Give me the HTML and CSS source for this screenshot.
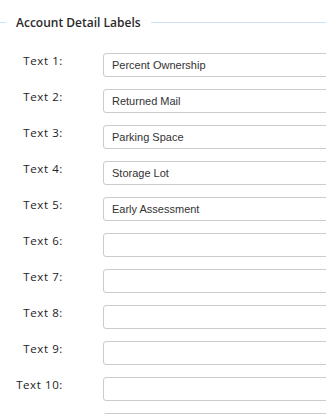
FILE: index.html
```html
<!DOCTYPE html>
<html>
<head>
<link rel="stylesheet" href="styles.css">
</head>
<body>

<fieldset class="labels">
    <legend>Account Detail Labels</legend>
    <div class="row"><label>Text 1:</label><input type="text" value="Percent Ownership"></div>
    <div class="row"><label>Text 2:</label><input type="text" value="Returned Mail"></div>
    <div class="row"><label>Text 3:</label><input type="text" value="Parking Space"></div>
    <div class="row"><label>Text 4:</label><input type="text" value="Storage Lot"></div>
    <div class="row"><label>Text 5:</label><input type="text" value="Early Assessment"></div>
    <div class="row"><label>Text 6:</label><input type="text"></div>
    <div class="row"><label>Text 7:</label><input type="text"></div>
    <div class="row"><label>Text 8:</label><input type="text"></div>
    <div class="row"><label>Text 9:</label><input type="text"></div>
    <div class="row"><label>Text 10:</label><input type="text"></div>
    <div class="row"><label>Text 11:</label><input type="text"></div>
</fieldset>

</body>
</html>
```
FILE: styles.css
```css
body {
    margin: 0;
    background-color: #fff;
    font-family: "Open Sans", sans-serif;
    overflow: hidden;
}

.labels {
    margin: 0;
    padding: 22px 0 0 6px;
    border: none;
    border-top: 1px solid #cfe1f7;
    margin-top: 14px;
}

legend {
    padding: 0 10px;
    font-size: 12px;
    font-weight: 600;
    color: #2b2b2b;
}

.row {
    display: flex;
    align-items: flex-start;
    margin-bottom: 12px;
}

label {
    width: 57px;
    text-align: right;
    font-size: 11.5px;
    letter-spacing: 0.6px;
    line-height: 14px;
    padding-top: 1px;
    color: #222;
    margin-right: 40px;
}

input {
    box-sizing: border-box;
    width: 260px;
    height: 24px;
    margin: 0;
    padding: 0 8px;
    border: 1px solid #ccc;
    border-radius: 3px;
    font-family: "Liberation Sans", Arial, sans-serif;
    font-size: 11px;
    color: #333;
    flex-shrink: 0;
}
```
